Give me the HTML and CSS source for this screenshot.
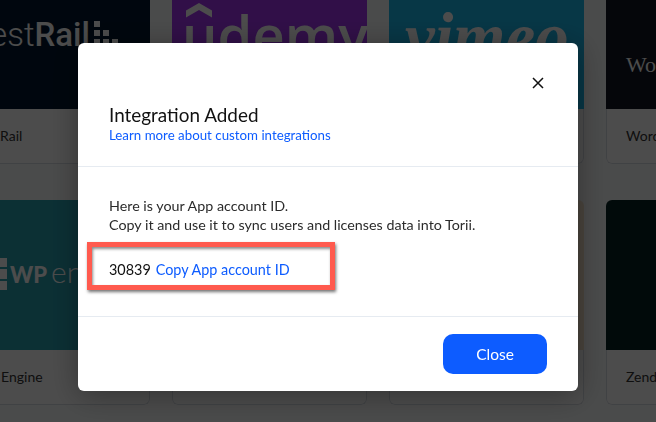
FILE: index.html
```html
<!DOCTYPE html>
<html lang="en">
  <head>
    <meta charset="utf-8">
    <title>Integrations</title>
    <link rel="stylesheet" href="styles.css">
  </head>
  <body>
    <div class="grid">
      <div class="card">
        <div class="logo logo_testrail">
          <span class="testrail_name">Test<b>Rail</b></span>
          <svg class="testrail_mark" width="25" height="25" viewBox="0 0 25 25" fill="#fff">
            <rect x="0" y="0" width="6" height="6"/><rect x="0" y="9" width="6" height="6"/><rect x="0" y="18" width="6" height="6"/>
            <rect x="9" y="9" width="6" height="6"/><rect x="9" y="18" width="6" height="6"/><rect x="18" y="18" width="6" height="6"/>
          </svg>
        </div>
        <div class="name">TestRail</div>
      </div>
      <div class="card">
        <div class="logo logo_udemy">
          <svg class="udemy_roof" width="26" height="15" viewBox="0 0 26 15"><path d="M0 7.5 L13 0 L26 7.5 V14.5 L13 7 L0 14.5 Z" fill="#fff"/></svg>
          <span class="udemy_name">udemy</span>
        </div>
        <div class="name">Udemy</div>
      </div>
      <div class="card">
        <div class="logo logo_vimeo"><span class="vimeo_name">vimeo</span></div>
        <div class="name">Vimeo</div>
      </div>
      <div class="card">
        <div class="logo logo_wordpress"><span class="wordpress_name">WordPress</span></div>
        <div class="name">WordPress</div>
      </div>

      <div class="card">
        <div class="logo logo_wpengine">
          <svg class="wp_mark" width="52" height="32" viewBox="0 0 52 32" fill="#fff">
            <rect x="44" y="0" width="8" height="9"/><rect x="44" y="11" width="8" height="10"/><rect x="44" y="23" width="8" height="9"/>
          </svg>
          <span class="wp_bold">WP</span><span class="wp_light">engine</span>
        </div>
        <div class="name">WP Engine</div>
      </div>
      <div class="card">
        <div class="logo logo_plain"></div>
        <div class="name"></div>
      </div>
      <div class="card">
        <div class="logo logo_brown"></div>
        <div class="name"></div>
      </div>
      <div class="card">
        <div class="logo logo_zendesk"></div>
        <div class="name">Zendesk</div>
      </div>
    </div>

    <div class="overlay">
      <div class="modal">
        <div class="modal_head">
          <button class="close_x" aria-label="Close">
            <svg width="12" height="12" viewBox="0 0 12 12"><path d="M1 1 L11 11 M11 1 L1 11" stroke="#111" stroke-width="1.5" fill="none"/></svg>
          </button>
          <h1 class="title">Integration Added</h1>
          <a class="link learn" href="#">Learn more about custom integrations</a>
        </div>
        <div class="modal_body">
          <p class="intro">Here is your App account ID.<br>Copy it and use it to sync users and licenses data into Torii.</p>
          <div class="id_row">
            <span class="id_value">30839</span>
            <a class="link" href="#">Copy App account ID</a>
            <div class="highlight"></div>
          </div>
        </div>
        <div class="modal_foot">
          <button class="button">Close</button>
        </div>
      </div>
    </div>
  </body>
</html>
```

FILE: styles.css
```css
html, body {
  margin: 0;
  height: 100%;
  overflow: hidden;
}

body {
  background: #f9fafb;
  font-family: "Lato", sans-serif;
  color: #2b2b2b;
}

.grid {
  display: grid;
  grid-template-columns: repeat(4, 195px);
  gap: 36px 22px;
  margin: -41px 0 0 -45px;
  width: 900px;
}

.card {
  border-radius: 6px;
  background: #fff;
  overflow: hidden;
  height: 205px;
}

.logo {
  height: 150px;
  box-sizing: border-box;
  overflow: hidden;
  display: flex;
  white-space: nowrap;
}

.name {
  height: 55px;
  box-sizing: border-box;
  padding: 18px 0 0 19px;
  font-size: 14px;
  line-height: 18px;
  color: #333;
  border: 1px solid #d8dde4;
  border-top: none;
  border-radius: 0 0 6px 6px;
}

.logo_testrail { background: #03172f; padding: 54px 0 0 17px; align-items: flex-start; }
.logo_udemy { background: #a435f0; padding: 44px 0 0 14px; flex-direction: column; align-items: flex-start; }
.logo_vimeo { background: #1ab7ea; padding: 37px 0 0 16px; }
.logo_wordpress { background: #111422; padding: 93px 0 0 20px; }
.logo_wpengine { background: #28a0b0; padding: 56px 0 0 0; align-items: baseline; }
.logo_plain { background: #fff; }
.logo_brown { background: #f5e3cb; }
.logo_zendesk { background: #062424; }

.testrail_name {
  font-family: "Roboto", sans-serif;
  font-size: 33px;
  line-height: 44px;
  font-weight: 300;
  color: #fff;
}

.testrail_name b {
  font-weight: 500;
}

.testrail_mark {
  margin: 8px 0 0 4px;
}

.udemy_name {
  margin: -19px 0 0 -4px;
  font-family: "Open Sans", sans-serif;
  font-size: 56px;
  font-weight: 600;
  line-height: 70px;
  color: #fff;
}

.vimeo_name {
  font-family: "Liberation Serif", serif;
  font-style: italic;
  font-weight: 700;
  font-size: 67px;
  line-height: 80px;
  color: #fff;
}

.wordpress_name {
  font-family: "Liberation Serif", serif;
  font-size: 22px;
  line-height: 26px;
  color: #fff;
}

.wp_mark {
  align-self: flex-start;
  margin-top: 2px;
}

.wp_bold, .wp_light {
  color: #fff;
}

.wp_bold {
  margin-left: 3px;
  font-size: 22px;
  font-weight: 900;
  line-height: 30px;
}

.wp_light {
  margin-left: 4px;
  font-size: 30px;
  font-weight: 300;
  line-height: 30px;
}

.overlay {
  position: fixed;
  inset: 0;
  background: rgba(0, 0, 0, 0.7);
  display: flex;
  justify-content: center;
  align-items: flex-start;
  padding-top: 43px;
}

.modal {
  width: 500px;
  height: 348px;
  background: #fff;
  border-radius: 6px;
  box-shadow: 0 4px 30px rgba(0, 0, 0, 0.35);
  display: flex;
  flex-direction: column;
}

.modal_head {
  height: 124px;
  box-sizing: border-box;
  padding: 61px 31px 0;
  border-bottom: 1px solid #e6ebf1;
  position: relative;
}

.close_x {
  position: absolute;
  top: 34px;
  right: 34px;
  padding: 0;
  border: none;
  background: none;
  line-height: 0;
}

.title {
  margin: 0;
  font-size: 18.9px;
  line-height: 22px;
  font-weight: 400;
  color: #111;
}

.link {
  font-size: 14.4px;
  line-height: 19px;
  color: #0d5cff;
  text-decoration: none;
  display: block;
}

.learn {
  font-size: 13.3px;
}

.modal_body {
  height: 150px;
  box-sizing: border-box;
  padding: 29px 31px 0;
  border-bottom: 1px solid #e6ebf1;
}

.intro {
  margin: 0;
  font-size: 14.3px;
  line-height: 19px;
  color: #2b2b2b;
}

.id_row {
  display: flex;
  gap: 5px;
  margin-top: 26px;
  line-height: 19px;
  position: relative;
}

.id_value {
  font-size: 14.4px;
  color: #111;
}

.highlight {
  position: absolute;
  left: -22px;
  top: -18px;
  width: 248px;
  height: 48px;
  box-sizing: border-box;
  border: 5px solid #ff5a4e;
  box-shadow: 1px 2px 3px rgba(0, 0, 0, 0.55), inset 1px 2px 3px rgba(0, 0, 0, 0.45);
}

.modal_foot {
  flex: 1;
  display: flex;
  justify-content: flex-end;
  padding: 17px 31px 0;
}

.button {
  width: 104px;
  height: 40px;
  border: none;
  border-radius: 10px;
  background: #0d5cff;
  color: #fff;
  font-family: "Lato", sans-serif;
  font-size: 15.5px;
}
```
